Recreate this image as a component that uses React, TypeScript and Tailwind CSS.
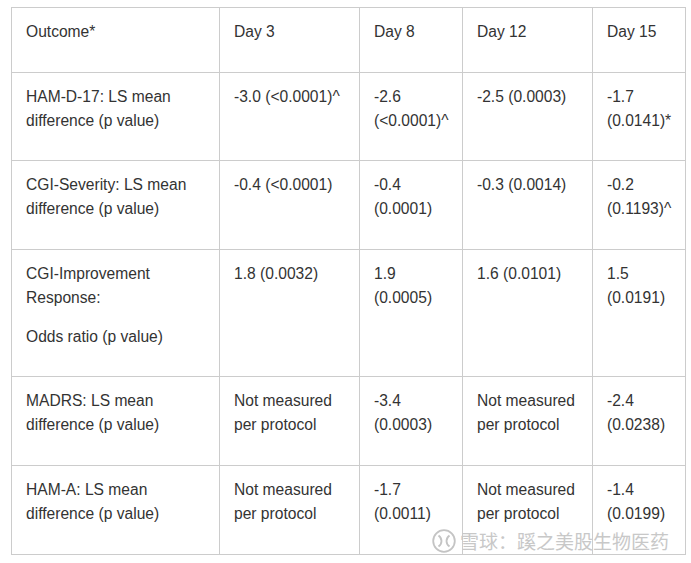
const rows: string[][][] = [
  [["HAM-D-17: LS mean difference (p value)"], ["-3.0 (<0.0001)^"], ["-2.6 (<0.0001)^"], ["-2.5 (0.0003)"], ["-1.7 (0.0141)*"]],
  [["CGI-Severity: LS mean difference (p value)"], ["-0.4 (<0.0001)"], ["-0.4 (0.0001)"], ["-0.3 (0.0014)"], ["-0.2 (0.1193)^"]],
  [["CGI-Improvement Response:", "Odds ratio (p value)"], ["1.8 (0.0032)"], ["1.9 (0.0005)"], ["1.6 (0.0101)"], ["1.5 (0.0191)"]],
  [["MADRS: LS mean difference (p value)"], ["Not measured per protocol"], ["-3.4 (0.0003)"], ["Not measured per protocol"], ["-2.4 (0.0238)"]],
  [["HAM-A: LS mean difference (p value)"], ["Not measured per protocol"], ["-1.7 (0.0011)"], ["Not measured per protocol"], ["-1.4 (0.0199)"]],
];

const headers = ["Outcome*", "Day 3", "Day 8", "Day 12", "Day 15"];

function Cell({ paras }: { paras: string[] }) {
  return (
    <td className="border border-[#cccccc] px-[14px] pt-[12px] pb-[12.6px] align-top">
      {paras.map((p, i) => (
        <p key={i} className="mb-[15px]">
          {p}
        </p>
      ))}
    </td>
  );
}

function XueqiuLogo() {
  return (
    <svg width="24" height="24" viewBox="0 0 24 24" fill="none" stroke="#c4c4c4" strokeWidth="1.8">
      <circle cx="12" cy="12" r="10.8" />
      <path d="M6.5 6.5 C10.5 9.5 10.5 14.5 6.5 17.5" />
      <path d="M17.5 6.5 C13.5 9.5 13.5 14.5 17.5 17.5" />
    </svg>
  );
}

export default function App() {
  return (
    <div
      className="relative w-[691px] h-[563px] bg-white overflow-hidden text-[#333333] text-[15.6px] leading-[24px]"
      style={{ fontFamily: '"Liberation Sans", Arial, sans-serif' }}
    >
      <table className="ml-[11px] mt-[7px] w-[674px] table-fixed border-collapse">
        <colgroup>
          <col className="w-[208px]" />
          <col className="w-[140px]" />
          <col className="w-[103px]" />
          <col className="w-[130px]" />
          <col className="w-[93px]" />
        </colgroup>
        <tbody>
          <tr>
            {headers.map((h) => (
              <Cell key={h} paras={[h]} />
            ))}
          </tr>
          {rows.map((r, i) => (
            <tr key={i}>
              {r.map((c, j) => (
                <Cell key={j} paras={c} />
              ))}
            </tr>
          ))}
        </tbody>
      </table>

      <div
        className="absolute left-[432px] top-[529px] flex items-center gap-[4px] whitespace-nowrap text-[19px] leading-[24px] text-[#c8c8c8]"
        style={{ fontFamily: '"Noto Sans CJK SC", sans-serif' }}
      >
        <XueqiuLogo />
        <span>雪球：蹊之美股生物医药</span>
      </div>
    </div>
  );
}
